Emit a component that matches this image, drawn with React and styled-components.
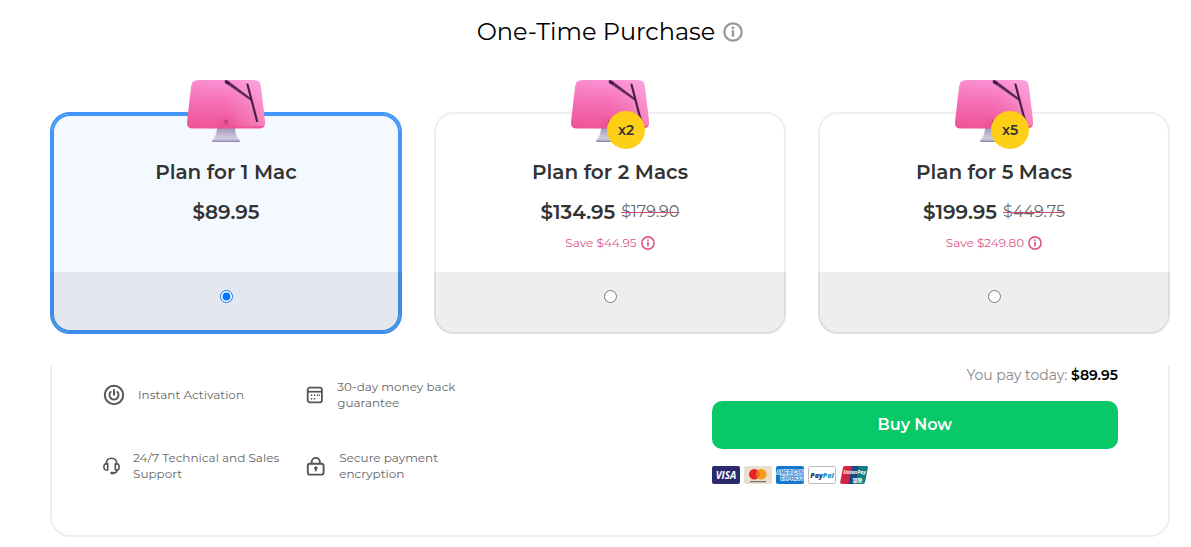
import React, { useId, useState } from 'react'
import styled, { createGlobalStyle } from 'styled-components'

const GlobalStyle = createGlobalStyle`
  * {
    box-sizing: border-box;
  }

  body {
    margin: 0;
    background: #fff;
    color: #333;
    font-family: Montserrat, Inter, sans-serif;
  }
`

const Page = styled.main`
  padding: 16px 21px 10px 50px;
`

const Heading = styled.h1`
  display: flex;
  align-items: center;
  justify-content: center;
  gap: 8px;
  margin: 0 0 64px;
  font-size: 24px;
  line-height: 32px;
  font-weight: 400;
  color: #000;

  svg {
    color: #999;
  }
`

const PlanGrid = styled.div`
  display: grid;
  grid-template-columns: repeat(3, 1fr);
  gap: 32px;
`

const PlanCard = styled.label`
  position: relative;
  display: flex;
  flex-direction: column;
  border: 2px solid ${props => (props.$selected ? '#3f97f8' : '#eee')};
  border-radius: 20px;
  background: ${props => (props.$selected ? '#f4f9ff' : '#fff')};
  box-shadow: ${props => (props.$selected ? 'inset 0 0 0 2px #3f97f8' : 'none')};
  cursor: pointer;
`

const PlanArt = styled.div`
  position: absolute;
  top: -34px;
  left: 50%;
  transform: translateX(-50%);

  svg {
    display: block;
  }
`

const Badge = styled.span`
  position: absolute;
  right: 4px;
  bottom: -6px;
  display: flex;
  align-items: center;
  justify-content: center;
  width: 38px;
  height: 38px;
  border-radius: 50%;
  background: #fdcf16;
  font-size: 14px;
  font-weight: 600;
`

const PlanBody = styled.div`
  flex: 1;
  padding: 44px 16px 20px;
  text-align: center;
`

const PlanName = styled.h2`
  margin: 0 0 12px;
  font-size: 20px;
  line-height: 28px;
  font-weight: 600;
`

const PriceLine = styled.div`
  display: flex;
  align-items: center;
  justify-content: center;
  gap: 6px;
  font-size: 20px;
  line-height: 28px;
  font-weight: 600;
`

const OldPrice = styled.s`
  font-size: 16px;
  font-weight: 400;
  color: #666;
  text-decoration: line-through 1px #c84f7c;
`

const Saving = styled.div`
  display: flex;
  align-items: center;
  justify-content: center;
  gap: 4px;
  margin-top: 8px;
  font-size: 12px;
  line-height: 18px;
  color: #e0558a;
`

const PlanFooter = styled.div`
  display: flex;
  justify-content: center;
  align-items: flex-start;
  height: 62px;
  margin: 0 -2px -2px;
  padding-top: 18px;
  border-radius: 0 0 20px 20px;
  background: rgba(20, 0, 0, 0.067);

  input {
    width: 13px;
    height: 13px;
    margin: 0;
  }
`

const Checkout = styled.section`
  display: flex;
  justify-content: space-between;
  margin-top: 32px;
  padding: 0 50px 51px;
  border: 2px solid #eee;
  border-top: none;
  border-radius: 0 0 20px 20px;
`

const Features = styled.ul`
  display: grid;
  grid-template-columns: 1fr 1fr;
  align-content: start;
  row-gap: 39px;
  width: 40%;
  margin: 0;
  padding: 13px 0 0;
  list-style: none;
`

const Feature = styled.li`
  display: flex;
  align-items: center;
  gap: 13px;
  min-height: 32px;
  padding: 0 20px 0 1px;
  font-size: 12px;
  line-height: 16px;
  color: #666;

  svg {
    flex: none;
    color: #555;
  }
`

const Payment = styled.div`
  width: 40%;
`

const Total = styled.p`
  margin: 0 0 17px;
  font-size: 14px;
  line-height: 18px;
  text-align: right;
  color: #888;

  strong {
    font-weight: 600;
    color: #000;
  }
`

const BuyButton = styled.button`
  display: block;
  width: 100%;
  height: 48px;
  padding: 0 0 2px;
  border: none;
  border-radius: 10px;
  background: #08c868;
  color: #fff;
  font-family: inherit;
  font-size: 16px;
  font-weight: 600;
  cursor: pointer;
`

const PayLogos = styled.div`
  display: flex;
  gap: 4px;
  margin-top: 17px;
`

const InfoIcon = ({ size }) => (
  <svg width={size} height={size} viewBox="0 0 20 20" fill="none" aria-hidden="true">
    <circle cx="10" cy="10" r="8.700" stroke="currentColor" strokeWidth="2.300" />
    <path d="M10 8.500v6.200" stroke="currentColor" strokeWidth="2.400" />
    <path d="M8.600 9.100h1.400" stroke="currentColor" strokeWidth="1.200" />
    <circle cx="10" cy="5.900" r="1.400" fill="currentColor" />
  </svg>
)

const MacArt = () => {
  const id = useId()
  return (
    <svg width="78" height="63" viewBox="0 0 78 63" aria-hidden="true">
      <defs>
        <linearGradient id={`${id}screen`} x1="0.5" y1="0" x2="0.4" y2="1">
          <stop offset="0" stopColor="#fb92d4" />
          <stop offset="0.5" stopColor="#f46db3" />
          <stop offset="1" stopColor="#ef5596" />
        </linearGradient>
        <linearGradient id={`${id}shine`} x1="0" y1="0" x2="1" y2="0">
          <stop offset="0.45" stopColor="#ffc4ea" stopOpacity="0" />
          <stop offset="1" stopColor="#ffc4ea" stopOpacity="0.4" />
        </linearGradient>
        <linearGradient id={`${id}stand`} x1="0" y1="0" x2="0" y2="1">
          <stop offset="0" stopColor="#9d8fb4" />
          <stop offset="0.75" stopColor="#d2cce2" />
          <stop offset="1" stopColor="#aaa3c3" />
        </linearGradient>
      </defs>
      <path d="M30 47h18c0 6 1.500 9.500 4.500 13 .8 1 .5 2-1 2h-25c-1.500 0-1.800-1-1-2C28.500 56.500 30 53 30 47z" fill={`url(#${id}stand)`} />
      <path d="M25.500 61.300h27" stroke="#8f88ad" strokeWidth="1" />
      <path
        d="M11 0h56q6 0 6.800 6l4.200 35.500q.7 7-6 7H6q-6.700 0-6-7L4.200 6Q5 0 11 0z"
        fill={`url(#${id}screen)`}
      />
      <path d="M11 0h56q6 0 6.800 6l4.200 35.500q.2 2.500-.8 4.200C60 46.500 45 46 30 42 38 30 40 14 37 0z" fill={`url(#${id}shine)`} />
      <path d="M30 37h18v11.500H30z" fill="#e0407c" opacity="0.150" />
      <path d="M38 .3l3 .2L65 19v2.500L38 3z" fill="#7a3a70" />
      <path d="M38.500 1.300l8 5.200L64.500 20" fill="none" stroke="#4a2450" strokeWidth="1.300" />
      <path d="M38 1l4 2.600" stroke="#3d1c44" strokeWidth="2.600" />
      <path d="M60.500 4.500l9.500 36.500" stroke="#4a1f4c" strokeWidth="2.200" strokeLinecap="round" />
      <path d="M40.500 40.800a1.900 1.900 0 1 0 .4 2.200M39 42h2" fill="none" stroke="#a52a64" strokeWidth="0.900" />
    </svg>
  )
}

const PowerIcon = () => (
  <svg width="22" height="22" viewBox="0 0 22 22" fill="none" stroke="currentColor" strokeWidth="2" strokeLinecap="round" aria-hidden="true">
    <circle cx="11" cy="11" r="9.200" />
    <path d="M7.700 7.900a4.500 4.500 0 1 0 6.600 0M11 6v4.800" />
  </svg>
)

const CalendarIcon = () => (
  <svg width="18" height="18" viewBox="0 0 18 18" fill="none" stroke="currentColor" aria-hidden="true">
    <rect x="1.700" y="1.700" width="14.200" height="14.600" rx="2" strokeWidth="1.800" />
    <path d="M2 5.700h14" strokeWidth="1.700" />
    <path d="M4.800 9.300h1.500M7.800 9.300h1.500M10.800 9.300h1.500M4.800 12.700h1.500M7.800 12.700h1.500" strokeWidth="1.500" />
    <path d="M12.800 9.300h1" strokeWidth="1.500" />
  </svg>
)

const HeadsetIcon = () => (
  <svg width="17" height="18" viewBox="0 0 17 18" fill="none" stroke="currentColor" strokeWidth="1.600" strokeLinecap="round" strokeLinejoin="round" aria-hidden="true">
    <path d="M3.200 7.200C3.200 3.500 5.300 1.200 8.500 1.200s5.300 2.300 5.300 6" />
    <path d="M4.700 6.800v6.200H3.300C1.600 13 .9 11.700.9 9.900s.7-3.100 2.400-3.100z" />
    <path d="M12.300 6.800v6.200h1.400c1.700 0 2.400-1.300 2.400-3.100s-.7-3.100-2.400-3.100z" />
    <path d="M13.900 13.200c0 2-1.200 2.800-3.200 2.800" />
    <path d="M8.600 16h1.800" strokeWidth="2.700" />
  </svg>
)

const LockIcon = () => (
  <svg width="20" height="20" viewBox="0 0 20 20" fill="none" stroke="currentColor" strokeWidth="1.900" strokeLinecap="round" aria-hidden="true">
    <rect x="1.800" y="7.800" width="15.800" height="10.800" rx="2" />
    <path d="M5.700 7.500V6a4.100 4.100 0 0 1 8.200 0v1.500" />
    <circle cx="9.800" cy="12" r="1.200" fill="currentColor" strokeWidth="1" />
    <path d="M9.800 12.500v2" />
  </svg>
)

const VisaLogo = () => (
  <svg width="28" height="18" viewBox="0 0 28 18" role="img" aria-label="Visa">
    <rect width="28" height="18" rx="2" fill="#2b2a6c" />
    <text x="14" y="13" textAnchor="middle" fontFamily="Open Sans, sans-serif" fontSize="10" fontWeight="700" fontStyle="italic" fill="#fff">VISA</text>
  </svg>
)

const MastercardLogo = () => (
  <svg width="28" height="18" viewBox="0 0 28 18" role="img" aria-label="Mastercard">
    <rect width="28" height="18" rx="2" fill="#e9dfcf" />
    <circle cx="10.300" cy="8.200" r="5.300" fill="#e8202a" />
    <circle cx="17.300" cy="8.200" r="5.300" fill="#f79b1c" />
    <path d="M13.800 4.200a5.300 5.300 0 0 1 0 8 5.300 5.300 0 0 1 0-8z" fill="#f26122" />
    <path d="M6 15.700h16" stroke="#5b5248" strokeWidth="1.200" strokeDasharray="1.300 .4" />
  </svg>
)

const AmexLogo = () => (
  <svg width="28" height="18" viewBox="0 0 28 18" role="img" aria-label="American Express">
    <rect width="28" height="18" rx="2" fill="#1278cd" />
    <g fontFamily="Liberation Sans, sans-serif" fontSize="5" fontWeight="700" fill="#1278cd" stroke="#fff" strokeWidth="1.200" paintOrder="stroke">
      <text x="14" y="7.500" textAnchor="middle">AMERICAN</text>
      <text x="28" y="14" textAnchor="end">EXPRESS</text>
    </g>
  </svg>
)

const PaypalLogo = () => (
  <svg width="28" height="18" viewBox="0 0 28 18" role="img" aria-label="PayPal">
    <rect x="0.5" y="0.5" width="27" height="17" rx="2" fill="#fff" stroke="#bbb" />
    <text x="14" y="11.500" textAnchor="middle" fontFamily="Open Sans, sans-serif" fontSize="7" fontWeight="800" fontStyle="italic" fill="#20386f">
      Pay<tspan fill="#1b96d2">Pal</tspan>
    </text>
  </svg>
)

const UnionPayLogo = () => (
  <svg width="28" height="18" viewBox="0 0 28 18" role="img" aria-label="UnionPay">
    <path d="M5 0h8L9.500 18H2Q-.2 18 .2 16L3 1.800Q3.300 0 5 0z" fill="#d32446" />
    <path d="M12 0h8l-3.500 18h-8z" fill="#174b80" />
    <path d="M19 0h7.500q1.800 0 1.400 1.800L25 16.200Q24.600 18 23 18h-7.500z" fill="#0b7d83" />
    <g fill="#fff">
      <text x="14.500" y="8" textAnchor="middle" fontFamily="Open Sans, sans-serif" fontSize="5" fontWeight="700" fontStyle="italic">UnionPay</text>
      <text x="17.500" y="15.500" textAnchor="middle" fontFamily="Noto Sans CJK SC, sans-serif" fontSize="5" fontWeight="700">银联</text>
    </g>
  </svg>
)

const plans = [
  { id: 'mac-1', name: 'Plan for 1 Mac', price: '$89.95' },
  { id: 'mac-2', name: 'Plan for 2 Macs', price: '$134.95', oldPrice: '$179.90', saving: '$44.95', badge: 'x2' },
  { id: 'mac-5', name: 'Plan for 5 Macs', price: '$199.95', oldPrice: '$449.75', saving: '$249.80', badge: 'x5' }
]

const features = [
  { text: 'Instant Activation', Icon: PowerIcon },
  { text: '30-day money back guarantee', Icon: CalendarIcon },
  { text: '24/7 Technical and Sales Support', Icon: HeadsetIcon },
  { text: 'Secure payment encryption', Icon: LockIcon }
]

function App() {
  const [selectedId, setSelectedId] = useState('mac-1')
  const selectedPlan = plans.find(plan => plan.id === selectedId)

  return (
    <Page>
      <GlobalStyle />
      <Heading>
        One-Time Purchase
        <InfoIcon size={20} />
      </Heading>

      <PlanGrid>
        {plans.map(plan => (
          <PlanCard key={plan.id} htmlFor={plan.id} $selected={plan.id === selectedId}>
            <PlanArt>
              <MacArt />
              {plan.badge && <Badge>{plan.badge}</Badge>}
            </PlanArt>
            <PlanBody>
              <PlanName>{plan.name}</PlanName>
              <PriceLine>
                {plan.price}
                {plan.oldPrice && <OldPrice>{plan.oldPrice}</OldPrice>}
              </PriceLine>
              {plan.saving && (
                <Saving>
                  Save {plan.saving}
                  <InfoIcon size={14} />
                </Saving>
              )}
            </PlanBody>
            <PlanFooter>
              <input
                type="radio"
                name="plan"
                id={plan.id}
                checked={plan.id === selectedId}
                onChange={() => setSelectedId(plan.id)}
              />
            </PlanFooter>
          </PlanCard>
        ))}
      </PlanGrid>

      <Checkout>
        <Features>
          {features.map(({ text, Icon }) => (
            <Feature key={text}>
              <Icon />
              <span>{text}</span>
            </Feature>
          ))}
        </Features>

        <Payment>
          <Total>
            You pay today: <strong>{selectedPlan.price}</strong>
          </Total>
          <BuyButton type="button">Buy Now</BuyButton>
          <PayLogos>
            <VisaLogo />
            <MastercardLogo />
            <AmexLogo />
            <PaypalLogo />
            <UnionPayLogo />
          </PayLogos>
        </Payment>
      </Checkout>
    </Page>
  )
}

export default App
